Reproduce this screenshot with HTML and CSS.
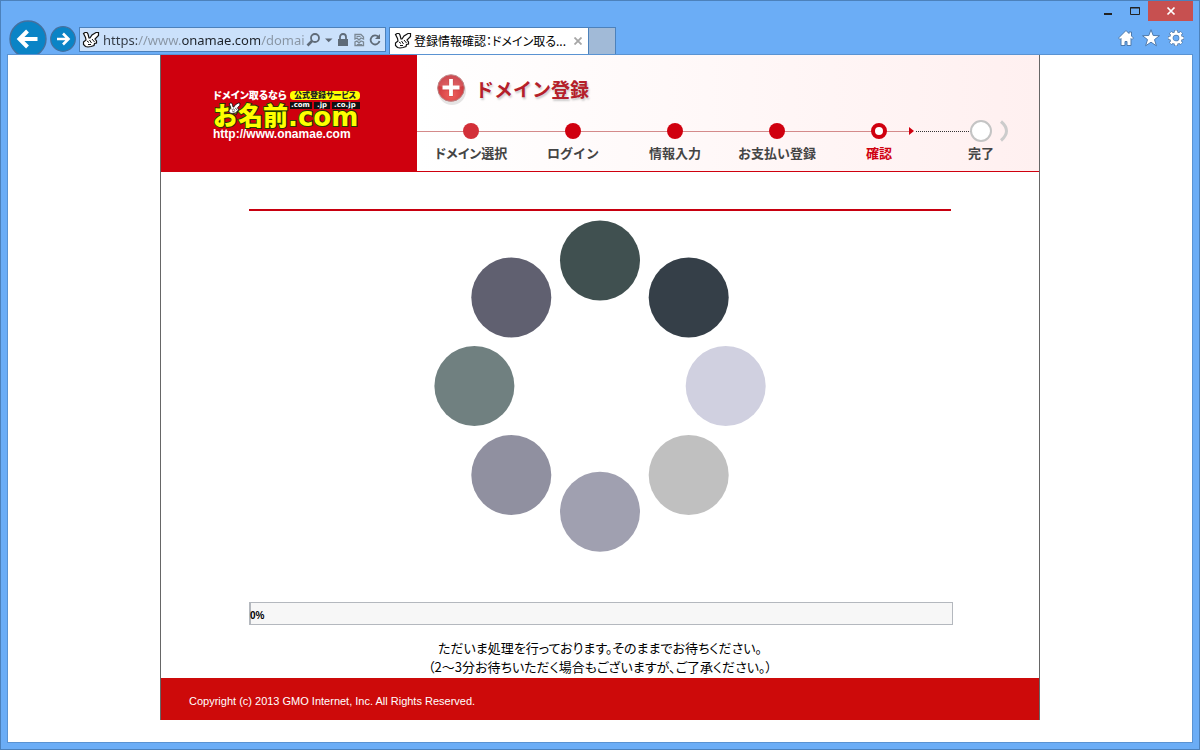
FILE: index.html
```
<!DOCTYPE html>
<html lang="ja">
<head>
<meta charset="utf-8">
<title>登録情報確認：ドメイン取るならお名前.com</title>
<link rel="stylesheet" href="styles.css">
</head>
<body>
<svg class="defs" aria-hidden="true">
  <symbol id="hand" viewBox="0 0 18 18">
    <path d="M1.500 2.500L3 1.500h2l1 1.500 1 4h1l2-3 4-2.500h2.500v3L13 8l1.500 2v2l-2 .5-.5 2-3 1L6 16l-2.500-.5-2-2v-2.500L4 9 3.500 6.500z" fill="#fff" stroke="#111" stroke-width="1.200"/>
    <path d="M5 10l2 1.500M7.500 9l2 3M10 8l2.500 3M6 13.500h3" fill="none" stroke="#111"/>
  </symbol>
</svg>
<div class="window">
  <header class="chrome">
    <div class="toolbar">
      <button class="nav nav-back" aria-label="戻る">
        <svg viewBox="0 0 38 38" width="38" height="38"><circle cx="19" cy="19" r="18" fill="#0a84c6" stroke="#45709e" stroke-width="1.4"/><path d="M28.500 19H11M18.500 11L10.500 19l8 8" fill="none" stroke="#fff" stroke-width="4"/></svg>
      </button>
      <button class="nav nav-forward" aria-label="進む">
        <svg viewBox="0 0 26 26" width="26" height="26"><circle cx="13" cy="13" r="12.300" fill="#0a84c6" stroke="#45709e" stroke-width="1.200"/><path d="M7 13h11M13 7.500l5.500 5.500-5.500 5.500" fill="none" stroke="#fff" stroke-width="2.600"/></svg>
      </button>
      <div class="address">
        <svg class="favicon"><use href="#hand"/></svg>
        <input class="url" type="text" aria-label="アドレス" value="https://www.onamae.com/domai">
        <button class="mini" aria-label="検索"><svg viewBox="0 0 16 16" width="16" height="16"><circle cx="9" cy="6" r="4" fill="none" stroke="#5f6b78" stroke-width="1.800"/><path d="M6 9L1.500 13.500" stroke="#5f6b78" stroke-width="2.600"/></svg></button>
        <button class="mini" aria-label="候補"><svg viewBox="1 0 14 16" width="14" height="16"><path d="M4 6.500h7.500L7.700 10.300z" fill="#5f6b78"/></svg></button>
        <button class="mini" aria-label="セキュリティ"><svg viewBox="0 0 16 16" width="16" height="16"><path d="M2 7h10v7H2z" fill="#5f6b78"/><path d="M4 7V5a3 3 0 0 1 6 0v2" fill="none" stroke="#5f6b78" stroke-width="1.800"/></svg></button>
        <button class="mini" aria-label="互換表示"><svg viewBox="0 0 16 16" width="16" height="16"><path d="M3 7V2.500h6l2.500 2.500v2L9 6 7 8 5 6zM3 10v3.500h8.500V10L9 9l-2 2-2-2z" fill="none" stroke="#7b8894" stroke-width="1.300"/><path d="M4.500 4.500h4M5 12.500h5" stroke="#7b8894"/></svg></button>
        <button class="mini" aria-label="更新"><svg viewBox="0 0 16 16" width="16" height="16"><path d="M10.500 5A4.500 4.500 0 1 0 11.500 9" fill="none" stroke="#5f6b78" stroke-width="1.800"/><path d="M12 2v5H7z" fill="#5f6b78"/></svg></button>
      </div>
      <div class="tab">
        <svg class="favicon"><use href="#hand"/></svg>
        <span class="tab-title">登録情報確認：ドメイン取る...</span>
        <button class="tab-close" aria-label="タブを閉じる"><svg viewBox="0 0 8 8" width="8" height="8"><path d="M.5.5l7 7M7.500.5l-7 7" stroke="#a6a6a6" stroke-width="1.800"/></svg></button>
      </div>
      <button class="new-tab" aria-label="新しいタブ"></button>
    </div>
    <div class="side">
      <div class="controls">
        <button class="control" aria-label="最小化"><svg viewBox="0 0 12 12" width="12" height="12"><path d="M2 9h8" stroke="#222" stroke-width="2"/></svg></button>
        <button class="control" aria-label="最大化"><svg viewBox="0 0 12 12" width="12" height="12"><path d="M1.500 2.500h9v7h-9zM1 3h10" fill="none" stroke="#222"/></svg></button>
        <button class="control control-close" aria-label="閉じる"><svg viewBox="0 0 12 12" width="12" height="12"><path d="M2.500 2.500l7 7M9.500 2.500l-7 7" stroke="#fff" stroke-width="1.700"/></svg></button>
      </div>
      <div class="tools">
        <button class="tool" aria-label="ホーム"><svg viewBox="0 0 18 18" width="18" height="18"><path d="M9 1.500L1.500 9l1.500 1.500 1-1V16.500h4v-4h2v4h4V9.500l1 1L16.500 9 14.500 7V3h-2.500v1.500z" fill="#fff" stroke="#4e7aac"/></svg></button>
        <button class="tool" aria-label="お気に入り"><svg viewBox="0 0 18 18" width="18" height="18"><path d="M9 .7l2.200 5.800 6.300.2-5 3.900 1.900 6.200L9 13.200l-5.400 3.600 1.900-6.200-5-3.900 6.300-.2z" fill="#fff" stroke="#4e7aac"/></svg></button>
        <button class="tool" aria-label="ツール"><svg viewBox="0 0 18 18" width="18" height="18"><g fill="none" stroke="#4e7aac" stroke-width="4"><circle cx="9" cy="9" r="4.600"/><path d="M9 1v3M9 14v3M1 9h3M14 9h3M3.300 3.300l2.200 2.200M12.500 12.500l2.200 2.200M14.700 3.300l-2.200 2.200M5.500 12.500l-2.200 2.200"/></g><g fill="none" stroke="#fff" stroke-width="2.500"><circle cx="9" cy="9" r="4.600"/><path d="M9 1.500v3M9 13.500v3M1.500 9h3M13.500 9h3M3.600 3.600l2 2M12.400 12.400l2 2M14.400 3.600l-2 2M5.600 12.400l-2 2"/></g></svg></button>
      </div>
    </div>
  </header>

  <div class="viewport">
    <div class="page">
      <div class="masthead">
        <a class="brand" href="#" aria-label="お名前.com">
          <svg class="logo" viewBox="0 0 150 54" width="150" height="54">
            <text class="logo-lead" x="0" y="12">ドメイン取るなら</text>
            <rect x="77" y="4" width="70" height="9" rx="4" fill="#ff0"/>
            <text class="logo-pill" x="81" y="11">公式登録サービス</text>
            <text class="logo-name" x="0" y="38">お名前</text>
            <text class="logo-com" x="75" y="39">.com</text>
            <g fill="#111"><rect x="77" y="15" width="22" height="7"/><rect x="101" y="15" width="16" height="7"/><rect x="119" y="15" width="28" height="7"/></g>
            <text class="logo-tld" x="78" y="20">.com</text>
            <text class="logo-tld" x="104" y="20">.jp</text>
            <text class="logo-tld" x="121" y="20">.co.jp</text>
            <use href="#hand" x="15" y="15" width="13" height="13"/>
            <text class="logo-url" x="0" y="51">http://www.onamae.com</text>
          </svg>
        </a>
        <div class="progress-head">
          <h1 class="title">
            <svg viewBox="0 0 32 34" width="32" height="34" aria-hidden="true">
              <defs><radialGradient id="badge" cx="50%" cy="75%" r="70%"><stop offset="0" stop-color="#f0625e"/><stop offset="1" stop-color="#c52e36"/></radialGradient></defs>
              <ellipse cx="17" cy="19" rx="14" ry="14" fill="#000" opacity=".1"/>
              <circle cx="16" cy="16" r="13.300" fill="url(#badge)" stroke="#b98080"/>
              <path d="M3.500 14a12.500 12.500 0 0 1 25 0q-12 4-25 0z" fill="#fff" opacity=".14"/>
              <path d="M16 7.500v17M7.500 16h17" stroke="#a52a2a" stroke-width="4.600" opacity=".4"/>
              <path d="M16 7v17M7.500 15.500h17" stroke="#fff" stroke-width="3.800"/>
            </svg>
            ドメイン登録
          </h1>
          <ol class="steps">
            <li class="step"><i class="dot dot-first"></i><span class="tight">ドメイン選択</span></li>
            <li class="step"><i class="dot"></i><span>ログイン</span></li>
            <li class="step"><i class="dot"></i><span>情報入力</span></li>
            <li class="step"><i class="dot"></i><span>お支払い登録</span></li>
            <li class="step step-current" aria-current="step"><i class="dot dot-ring"></i><span>確認</span></li>
            <li class="step step-last"><i class="dot dot-end"></i><span>完了</span><svg class="arc" viewBox="0 0 9 22" width="9" height="22" aria-hidden="true"><path d="M1 1.500q11 9.500 0 19" fill="none" stroke="#ccc" stroke-width="3"/></svg></li>
          </ol>
        </div>
      </div>

      <main class="content">
        <hr class="rule">
        <svg class="spinner" viewBox="0 0 332 332" width="332" height="332" role="img" aria-label="処理中">
          <circle cx="166" cy="40.500" r="40" fill="#405050"/>
          <circle cx="254.700" cy="77.500" r="40" fill="#353f48"/>
          <circle cx="291.700" cy="166" r="40" fill="#d0d0e0"/>
          <circle cx="254.700" cy="255" r="40" fill="#c0c0c0"/>
          <circle cx="166" cy="291.700" r="40" fill="#a0a0b0"/>
          <circle cx="77.300" cy="255" r="40" fill="#9090a0"/>
          <circle cx="40.400" cy="166" r="40" fill="#708080"/>
          <circle cx="77.300" cy="77.500" r="40" fill="#606070"/>
        </svg>
        <div class="bar" role="progressbar" aria-valuenow="0" aria-valuemin="0" aria-valuemax="100">0%</div>
        <p class="message">ただいま処理を行っております。そのままでお待ちください。<br>（2～3分お待ちいただく場合もございますが、ご了承ください。）</p>
      </main>

      <footer class="footer">Copyright (c) 2013 GMO Internet, Inc. All Rights Reserved.</footer>
    </div>
  </div>
</div>
</body>
</html>
```
FILE: styles.css
```
* {
  box-sizing: border-box;
}

body {
  margin: 0;
  font-family: "Liberation Sans", "Noto Sans CJK JP", sans-serif;
  color: #000;
}

button {
  padding: 0;
  border: 0;
  background: none;
}

svg {
  display: block;
}

.defs {
  position: absolute;
  width: 0;
  height: 0;
}

.window {
  display: flex;
  flex-direction: column;
  min-height: 100vh;
  padding: 0 6px 6px;
  border: 1px solid #4c81bb;
  background: #6badf6;
}

/* Browser chrome */

.chrome {
  display: flex;
  justify-content: space-between;
  height: 53px;
  overflow: hidden;
}

.toolbar {
  display: flex;
  align-items: flex-end;
  min-width: 0;
}

.nav-back {
  margin: 0 3px -4px 2px;
}

.nav-forward {
  margin-right: 3px;
  margin-bottom: 2px;
}

.address {
  display: flex;
  align-items: center;
  width: 307px;
  height: 25px;
  margin-bottom: 2px;
  padding: 0 1px 0 2px;
  border: 1px solid #4c81bb;
  background: #cbe1fb;
}

.favicon {
  flex: none;
  width: 18px;
  height: 18px;
}

.url {
  flex: 1;
  min-width: 0;
  height: 22px;
  margin-left: 3px;
  padding: 0;
  border: 0;
  outline: 0;
  font: 13px "Noto Sans", sans-serif;
  color: transparent;
  background: linear-gradient(90deg, #333b45 0 34px, #8894a2 34px 78px, #1d2229 78px 157px, #8894a2 157px);
  background-clip: text;
  -webkit-background-clip: text;
}

.mini {
  flex: none;
}

.tab {
  display: flex;
  align-items: center;
  width: 200px;
  height: 27px;
  margin-left: 3px;
  padding: 0 6px 0 4px;
  border: 1px solid #4c81bb;
  border-bottom: 0;
  background: #fff;
}

.tab-title {
  flex: 1;
  margin-left: 2px;
  font: 12px/18px "Noto Sans CJK JP", sans-serif;
  font-feature-settings: "palt";
  white-space: nowrap;
}

.new-tab {
  width: 27px;
  height: 27px;
  border: 1px solid #4c81bb;
  border-width: 1px 1px 0 0;
  background: #a1bad7;
}

.side {
  display: flex;
  flex-direction: column;
  align-items: flex-end;
}

.controls {
  display: flex;
}

.control {
  display: flex;
  align-items: center;
  justify-content: center;
  width: 27px;
  height: 20px;
}

.control-close {
  width: 45px;
  background: #c75050;
}

.tools {
  display: flex;
  gap: 7px;
  margin-top: 8px;
  padding-right: 8px;
}

/* Page */

.viewport {
  flex: 1;
  border: 1px solid #5a93d2;
  background: #fff;
}

.page {
  max-width: 880px;
  margin: 0 auto;
  border: solid #666;
  border-width: 0 1px;
}

.masthead {
  display: flex;
  min-height: 117px;
  background: #cf000e;
}

.brand {
  display: flex;
  flex: none;
  align-items: center;
  justify-content: center;
  width: 256px;
  padding: 0 3px 0 0;
}

.logo text {
  font-family: "Noto Sans CJK JP", sans-serif;
  font-weight: 900;
}

.logo .logo-lead {
  fill: #fff;
  font-size: 10px;
  font-feature-settings: "palt";
}

.logo .logo-pill {
  fill: #222;
  font-size: 8px;
  font-feature-settings: "palt";
}

.logo .logo-name {
  fill: #ff0;
  stroke: #253c00;
  stroke-width: 2px;
  paint-order: stroke;
  font-size: 25px;
}

.logo .logo-com {
  fill: #ff0;
  stroke: #253c00;
  stroke-width: 2px;
  paint-order: stroke;
  font-family: "DejaVu Sans", sans-serif;
  font-size: 26px;
}

.logo .logo-tld {
  fill: #fff;
  font-family: "DejaVu Sans", sans-serif;
  font-size: 7px;
}

.logo .logo-url {
  fill: #fff;
  font-family: "Liberation Sans", sans-serif;
  font-size: 12px;
}

.progress-head {
  flex: 1;
  margin-bottom: 1px;
  background: linear-gradient(90deg, #fff, #fff0f0);
}

.title {
  display: flex;
  align-items: center;
  gap: 8px;
  height: 68px;
  margin: 0;
  padding-left: 18px;
  font: bold 19px/28px "Noto Sans CJK JP", sans-serif;
  color: #b5202a;
  text-shadow: 1px 2px 2px #ccc;
}

.steps {
  display: grid;
  grid-template-columns: repeat(6, minmax(0, 102px));
  margin: 0;
  padding: 0 0 0 3px;
  list-style: none;
  background: linear-gradient(#d48a8a, #d48a8a) 0 8px / 3px 1px no-repeat;
}

.step {
  position: relative;
  display: flex;
  flex-direction: column;
  align-items: center;
  gap: 5px;
  font: bold 13px/18px "Noto Sans CJK JP", sans-serif;
  color: #444;
  white-space: nowrap;
  background: linear-gradient(#d48a8a, #d48a8a) 0 8px / 100% 1px no-repeat;
}

.tight {
  font-feature-settings: "palt";
}

.dot {
  width: 16px;
  height: 16px;
  border-radius: 50%;
  background: #d0000f;
}

.dot-first {
  background: #d32f38;
}

.dot-ring {
  border: 4px solid #d0000f;
  background: #fff;
}

.dot-end {
  width: 22px;
  height: 22px;
  margin: -3px 0;
  border: 2px solid #c4c4c4;
  background: #fff;
}

.step-current {
  color: #d0000f;
  background-size: 80% 1px;
}

.step-current::after {
  position: absolute;
  top: 4px;
  left: 79%;
  border: 4px solid transparent;
  border-left: 5px solid #d0000f;
  border-right: 0;
  content: "";
}

.step-current::before {
  position: absolute;
  top: 8px;
  left: 86%;
  width: 54%;
  border-top: 1px dotted #333;
  content: "";
}

.step-last {
  background: none;
}

.arc {
  position: absolute;
  top: -3px;
  left: 70px;
}

.content {
  display: flex;
  flex-direction: column;
  align-items: center;
  padding: 37px 88px 2px;
}

.rule {
  width: 100%;
  height: 2px;
  margin: 0;
  border: 0;
  background: #c80010;
}

.spinner {
  max-width: 100%;
  margin-top: 9px;
}

.bar {
  box-sizing: content-box;
  align-self: flex-start;
  width: 100%;
  height: 21px;
  margin-top: 50px;
  border: 1px solid #b4b8be;
  background: #f7f7f7;
  box-shadow: inset 1px 0 #b4b8be;
  font-weight: bold;
  font-size: 10px;
  line-height: 25px;
}

.message {
  margin: 13px 0 0;
  font: 13px/19px "Noto Sans CJK JP", sans-serif;
  font-feature-settings: "palt";
  text-align: center;
}

.footer {
  padding: 14px 28px 10px;
  background: #cd0a0a;
  font-size: 11px;
  line-height: 18px;
  color: #fff;
}
```
